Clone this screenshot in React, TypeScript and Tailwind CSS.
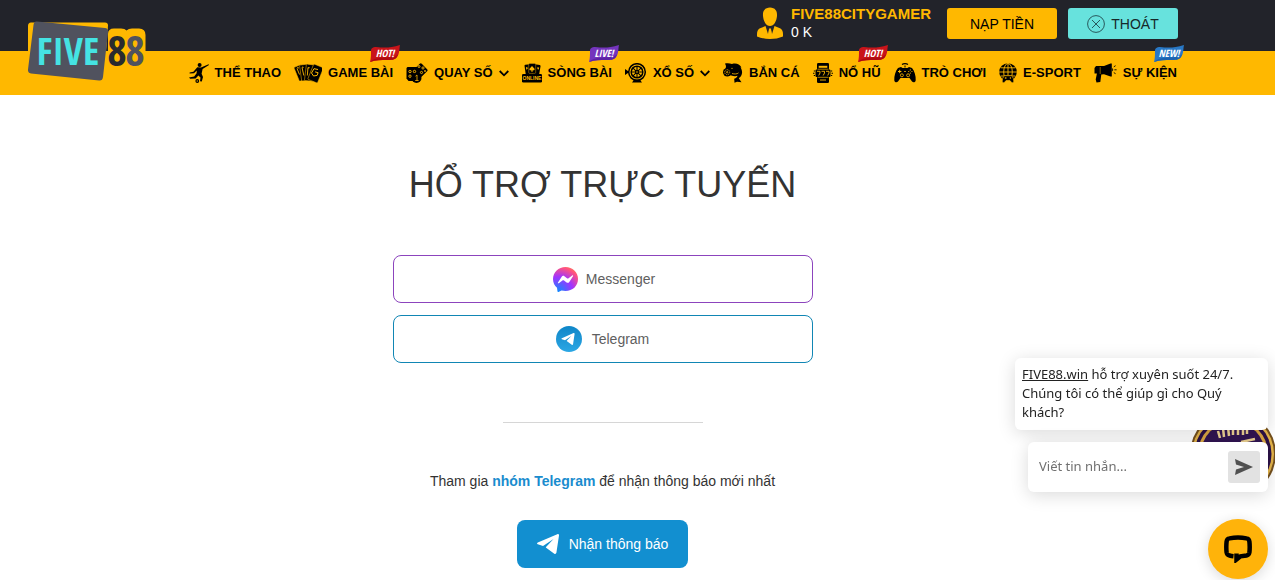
import React from 'react';

type IconProps = { children: React.ReactNode; w: string; box: string };

function Icon({ children, w, box }: IconProps) {
  return (
    <svg viewBox={box} className={`${w} shrink-0`} fill="#000" aria-hidden="true">
      {children}
    </svg>
  );
}

const Y = '#ffb800';
const CONDENSED = 'Open Sans Condensed, Roboto Condensed, Liberation Sans Narrow, DejaVu Sans Condensed, sans-serif';

const soccer = (
  <Icon w="w-5 h-5" box="0 0 20 20">
    <circle cx="10.6" cy="2" r="2" />
    <path d="M8.3 4.2 12 4.4 19.6 1.2 20 2 13.6 6.1 12.6 10.8 14 14 12.8 18.5 11 18.3 11.5 14.6 9.4 12.4 6.6 15.4 1.2 15.8 0 14.4 5.2 13.6 7.6 10.2 7.8 7.4 5 10.2 0.6 10.6 0.6 9.6 4.4 8.8Z" />
    <circle cx="8.3" cy="18" r="1.9" />
    <path d="M7.6 17.6h1.4v.9H7.6z" fill={Y} />
  </Icon>
);

const cards = (
  <Icon w="w-7 h-5" box="0 0 28 20">
    <g stroke={Y} strokeWidth=".5">
      <rect x="2" y="2.5" width="8" height="15" rx="1" transform="rotate(-22 6 9)" />
      <rect x="6.5" y="1.5" width="8.5" height="16" rx="1" transform="rotate(-8 11 9)" />
      <rect x="11.5" y="1.5" width="9" height="16.5" rx="1" transform="rotate(7 16 9)" />
      <rect x="16.500" y="2" width="10.500" height="16.500" rx="1" transform="rotate(22 21 10)" />
    </g>
    <path d="m3 5.500 2.500 6M8 4.500l1.800 8M14 4.500l-.7 8" stroke={Y} strokeWidth=".9" />
    <path d="m24 6.500-4-.8-2.500 4.300 2 3 3.600-.6 1-2.700-3-.8" fill="none" stroke={Y} strokeWidth="1" />
    <path d="m3 4 2 .5-1 1.5zM8 3.6l1.8.3-1 1.6zM14 4l1.8.3-1 1.6z" fill={Y} />
  </Icon>
);

const dice = (
  <Icon w="w-[22px] h-5" box="0 0 22 20">
    <rect x="9.5" y="2" width="10.5" height="10.5" rx="1.5" transform="rotate(45 14.8 7.2)" />
    <path d="M1.5 4H12l2 2v11l-2 1H2.5L.5 15.5V5z" />
    <g fill="none" stroke={Y} strokeWidth=".9">
      <circle cx="13" cy="3.5" r="1" /><circle cx="17" cy="5" r="1.1" /><circle cx="15.5" cy="9.5" r="1.1" /><circle cx="19" cy="8" r=".6" />
      <circle cx="4" cy="8.5" r="1.2" /><circle cx="8.5" cy="8.5" r="1.2" /><circle cx="4" cy="13.2" r="1.2" />
    </g>
    <circle cx="10.5" cy="15" r="5" />
    <path d="M9.5 13.2 11 12v5.5M9.2 17.5h3.4" fill="none" stroke={Y} strokeWidth=".8" />
  </Icon>
);

const online = (
  <Icon w="w-5 h-5" box="0 0 20 20">
    <rect x="3" y="1.5" width="7" height="10" rx="1" transform="rotate(-8 6 6)" />
    <rect x="11" y="1.5" width="7" height="10" rx="1" transform="rotate(10 14 6)" />
    <rect x="6.7" y=".4" width="7" height="10" rx="1" stroke={Y} strokeWidth=".4" />
    <path d="m10 3 2.500 2.700c.5 1.400-1 2-2 1.200l.5 1.500H9l.5-1.500c-1 .8-2.500.2-2-1.200z" fill={Y} />
    <path d="m4 4.500 1.200-.8.5 2-1.300 1zM15.500 4l1.700.8-.8 2-1-.7z" fill={Y} />
    <rect y="11" width="20" height="8.500" rx="1.300" />
    <text x="10" y="17" fill={Y} fontSize="5" fontWeight="700" textAnchor="middle" fontFamily="Liberation Sans, sans-serif">ONLINE</text>
  </Icon>
);

const wheel = (
  <Icon w="w-[22px] h-5" box="0 0 22 20">
    <g fill="none" stroke="#000">
      <circle cx="12" cy="9" r="8.3" strokeWidth="1.5" />
      <circle cx="12" cy="9" r="5.8" strokeWidth="1.5" />
      <path d="M12 3v12M6 9h12M7.8 4.8l8.4 8.400M16.200 4.800l-8.400 8.400" strokeWidth="1.1" />
    </g>
    <circle cx="12" cy="9" r="2" />
    <circle cx="12" cy="9" r=".8" fill={Y} />
    <path d="M0 6 4.500 9 0 12zM9 16.800h6l2 2.700H7z" />
  </Icon>
);

const fish = (
  <Icon w="w-5 h-5" box="0 0 20 20">
    <path d="M3 3 2 .500C5 0 7 .3 9 1c4-1.300 7.500 0 9.500 3.500l-1-.2c1.200 2 1.800 4 1.500 6-.3 2.200-1.500 4-3.200 5l2.700 4-4.500-.5-2.500 1-.3-4c2-.7 3-1.500 3.300-3-2 .8-4 .5-6.300-.3L4 12 2.600 6z" />
    <circle cx="4.2" cy="9.200" r="4.200" />
    <g stroke={Y} fill="none" strokeWidth=".8">
      <circle cx="4.2" cy="9.200" r="2.5" strokeDasharray="1.2 .7" />
      <circle cx="4.2" cy="9.200" r=".7" />
      <path d="M9 10.500c2.500.8 5 .6 6.500-.6" />
    </g>
    <circle cx="9" cy="5.3" r=".6" fill={Y} />
  </Icon>
);

const slot = (
  <Icon w="w-5 h-5" box="0 0 20 20">
    <rect x="4" y="0" width="12" height="20" rx="1.3" />
    <path d="M5.7 2.800h8.600v2H5.700z" fill={Y} />
    <rect x="2.500" y="6.500" width="15" height="7.500" rx="1" />
    <path d="M4.500 6.200h11M4.500 14.300h11" stroke={Y} strokeWidth=".7" />
    <path d="M4 8.300h3v1.700l-1.300 2.500M8.500 8.300h3v1.700l-1.300 2.500M13 8.300h3v1.700l-1.300 2.500" fill="none" stroke={Y} strokeWidth=".9" />
    <path d="M.8 7.500H2v1H.8zM.8 12H2v1H.8zM18 7.500h1.200v1H18zM18 12h1.200v1H18zM0 9.800h1.500v1H0zM18.500 9.800H20v1h-1.500z" />
    <path d="M7 17h6" stroke={Y} strokeWidth=".9" />
  </Icon>
);

const gamepad = (
  <Icon w="w-[22px] h-5" box="0 0 22 20">
    <path d="M8 1.5C9.5.3 12.5.3 14 1.5" fill="none" stroke="#000" strokeWidth="1.1" />
    <path d="M10.500 2.500h1v2h-1zM4 5l3-1 1.500 1h5L15 4l3 1c2.500 3 4 8 3.700 12.200-.2 2-2.200 2.800-3.700 1.400L15.500 15h-9L4 18.600C2.500 20 .5 19.200.3 17.200 0 13 1.500 8 4 5z" />
    <g fill="none" stroke={Y} strokeWidth=".8">
      <circle cx="7.9" cy="12.300" r="1.500" /><circle cx="14.100" cy="12.300" r="1.500" />
      <path d="M5.700 6.800v3.400M4 8.500h3.400" strokeWidth="1" />
    </g>
    <g fill={Y}><circle cx="16.3" cy="6.900" r=".6" /><circle cx="16.3" cy="10.100" r=".6" /><circle cx="14.700" cy="8.500" r=".6" /><circle cx="17.900" cy="8.500" r=".6" /><path d="M10 8h2v.8h-2z" /></g>
  </Icon>
);

const globe = (
  <Icon w="w-[18px] h-5" box="0 0 18 20">
    <circle cx="9" cy="9" r="8.8" />
    <g fill="none" stroke={Y} strokeWidth=".9">
      <ellipse cx="9" cy="9" rx="4.300" ry="8.500" />
      <path d="M9 0v12M0 9h18M1.700 4.800h14.600M1.700 13h14.600" />
    </g>
    <path d="M5.700 12.700h6.600c1.800 1 2.800 3.800 2.400 6-.4 1.300-1.800 1.400-2.500.4l-1.200-1.600H7l-1.200 1.600c-.7 1-2.100.9-2.500-.4-.4-2.200.6-5 2.400-6z" stroke={Y} strokeWidth=".7" />
    <path d="M6.700 14v2M5.700 15h2" stroke={Y} strokeWidth=".6" /><circle cx="11.400" cy="15" r=".7" fill={Y} />
  </Icon>
);

const horn = (
  <Icon w="w-[23px] h-5" box="0 0 23 20">
    <path d="M2 3h8L16.500.5h1.300v13h-1.300L10 11.200l-2.700.2-1 7.600-3.800.6-.8-3 1.200-6L.5 10.400V5z" />
    <path d="M6.200 4v7" stroke={Y} strokeWidth=".5" />
    <path d="M18.200 5c1.300 1 1.300 2.600 0 3.600z" />
    <path d="m19.800 3.800 1.800-1.100M20.400 6.800h2.200M19.800 9.600l1.800 1.100" stroke="#000" strokeWidth=".9" />
  </Icon>
);

type Badge = { text: string; fill: string; dark: string };
type Item = { label: string; icon: React.ReactNode; menu?: boolean; badge?: Badge };

const hot: Badge = { text: 'HOT!', fill: '#c9141a', dark: '#b00a10' };

const items: Item[] = [
  { label: 'THỂ THAO', icon: soccer },
  { label: 'GAME BÀI', icon: cards, badge: hot },
  { label: 'QUAY SỐ', icon: dice, menu: true },
  { label: 'SÒNG BÀI', icon: online, badge: { text: 'LIVE!', fill: '#7434bd', dark: '#5c22a4' } },
  { label: 'XỔ SỐ', icon: wheel, menu: true },
  { label: 'BẮN CÁ', icon: fish },
  { label: 'NỔ HŨ', icon: slot, badge: hot },
  { label: 'TRÒ CHƠI', icon: gamepad },
  { label: 'E-SPORT', icon: globe },
  { label: 'SỰ KIỆN', icon: horn, badge: { text: 'NEW!', fill: '#2878c6', dark: '#1d62ae' } },
];

function Flag({ text, fill, dark }: Badge) {
  return (
    <svg viewBox="0 0 32 18" className="absolute -top-[18px] -right-2 h-[18px] w-8" aria-hidden="true">
      <path d="M2 6c0-3 2-4 5-4 9 1 14 1 24-2-1 4 0 8-3 12-2 3-6 3-10 3-6 0-11 0-17 2 1-4 1-7 1-11z" fill={fill} />
      <path d="M1 17c6-2 11-2 17-2 4 0 8 0 10-3l1.300-3C26 13 20 12 14 12.500 8 13 4 14 1 17z" fill={dark} />
      <text x="16" y="12" fontSize="10" fontStyle="italic" fill="#fff" textAnchor="middle" fontFamily={CONDENSED}>{text}</text>
    </svg>
  );
}

function Logo() {
  return (
    <a href="#" aria-label="FIVE88" className="absolute top-5 left-7 block">
      <svg viewBox="0 0 120 62" className="h-[62px] w-[120px]">
        <path d="M3 2.500h74q3 0 3 3L77 45H0V6q0-3.500 3-3.500z" fill={Y} />
        <path d="M80 14q0-5.500 6-5.500h7q4 0 5.500 2 2-2 5.500-2h7q6.500 0 6.500 6.500v28H80z" fill={Y} />
        <path d="M9 1.500 77 8q3.500.5 3 4l-5 45q-.5 4-4 3.500L3 53.500q-3.500-.5-3-4L5.500 5q.5-4 3.500-3.500z" fill="#50525e" />
        <g fontFamily={CONDENSED} fontWeight="700" textAnchor="middle">
          <text x="40" y="45" fontSize="38" fill="#45e3e3">FIVE</text>
          <text x="89" y="46" fontSize="42" fill="#292a2e">8</text>
          <text x="107" y="46" fontSize="42" fill="#50525e">8</text>
        </g>
      </svg>
    </a>
  );
}

function Plane({ className }: { className: string }) {
  return (
    <svg viewBox="0 0 22 20" className={className} fill="#fff" aria-hidden="true">
      <path d="M20.300.200.800 8.600c-1 .5-1 1.300 0 1.700l5.200 1.700L16.500 5 9 13l-.2.500 8.500 6.200c1 .6 1.800.2 2.100-.9L22 1.500c.2-1.200-.6-1.700-1.700-1.300z" />
    </svg>
  );
}

function Header() {
  return (
    <header className="relative font-['Liberation_Sans',sans-serif]">
      <div className="flex h-[51px] items-start justify-end bg-[#22232a] pr-[97px]">
        <div className="mt-[5px] flex items-center gap-2">
          <svg viewBox="0 0 26 32" className="h-8 w-[26px]" aria-hidden="true">
            <path d="M13 .5c5 0 7.500 3.500 7 8.500-.4 5-3 10-7 10s-6.600-5-7-10C5.500 4 8 .5 13 .5z" fill={Y} />
            <path d="m8.500 19-6 2.500Q0 23 0 27v2.500Q6 32 13 32t13-2.500V27q0-4-2.500-5.500l-6-2.500L15 27l-1-5h-2l-1 5z" fill={Y} />
            <path d="M12 21.500h2v2l.5 4-1.500 2-1.500-2 .5-4z" fill={Y} />
          </svg>
          <div className="flex flex-col">
            <span className="text-[15px] leading-[18px] font-bold text-[#ffb800]">FIVE88CITYGAMER</span>
            <span className="text-sm leading-[18px] text-white">0 K</span>
          </div>
        </div>
        <button className="mt-2 ml-4 h-[31px] w-[110px] rounded-[3px] bg-[#ffb800] text-sm text-black">NẠP TIỀN</button>
        <button className="mt-2 ml-[11px] flex h-[31px] w-[110px] items-center justify-center gap-[6px] rounded-[3px] bg-[#67e2dd] text-sm text-[#16282a]">
          <svg viewBox="0 0 18 18" className="h-[18px] w-[18px]" fill="none" stroke="#28595c" aria-hidden="true">
            <circle cx="9" cy="9" r="8.400" />
            <path d="m5 5 8 8M13 5l-8 8" />
          </svg>
          THOÁT
        </button>
      </div>
      <nav className="flex h-11 items-center justify-end gap-[13px] bg-[#ffb800] pr-[98px]">
        {items.map((it) => (
          <a key={it.label} href="#" className="relative flex items-center gap-[6px] text-[13px] leading-5 font-bold whitespace-nowrap text-black">
            {it.icon}
            <span>{it.label}</span>
            {it.menu && (
              <svg viewBox="0 0 10 7" className="h-[7px] w-[10px]" fill="none" stroke="#000" strokeWidth="1.8" aria-hidden="true">
                <path d="m.7 1 4.300 4.300L9.300 1" />
              </svg>
            )}
            {it.badge && <Flag {...it.badge} />}
          </a>
        ))}
      </nav>
      <Logo />
    </header>
  );
}

function Chat() {
  return (
    <aside className="fixed right-[7px] bottom-px flex flex-col items-end font-['Noto_Sans',sans-serif] text-[13px]">
      <svg viewBox="0 0 86 68" className="absolute top-[53px] -right-2 h-[68px] w-[86px]" aria-hidden="true">
        <circle cx="43" cy="43" r="43" fill="#74501e" />
        <circle cx="43" cy="43" r="41" fill="#e5b54a" />
        <circle cx="43" cy="43" r="38.500" fill="#2c1247" />
        <circle cx="43" cy="43" r="35" fill="#dca843" />
        <circle cx="43" cy="43" r="32" fill="#321553" />
        <path d="m28 20 2 7M33 17l1 9M38 16l1 9M43 16v8M48 16v8M53 16v8M57 17v6M51 31l14-3" stroke="#efd494" strokeWidth="2.500" />
      </svg>
      <p className="relative w-[253px] rounded-md bg-white px-[7px] pt-[7px] pb-2 leading-[19px] text-[#222] shadow-[0_3px_18px_rgba(0,0,0,0.15)]">
        <a href="#" className="underline">FIVE88.win</a> hỗ trợ xuyên suốt 24/7. Chúng tôi có thể giúp gì cho Quý khách?
      </p>
      <form className="relative mt-3 flex h-[50px] w-60 items-center rounded-md bg-white pr-2 pl-[11px] shadow-[0_3px_18px_rgba(0,0,0,0.15)]" onSubmit={(e) => e.preventDefault()}>
        <input type="text" aria-label="Tin nhắn" placeholder="Viết tin nhắn..." className="min-w-0 flex-1 bg-transparent outline-none placeholder:text-[#707070]" />
        <button aria-label="Gửi" className="flex h-8 w-8 items-center justify-center rounded-[3px] bg-[#e2e2e2]">
          <svg viewBox="0 0 18 16" className="h-4 w-[18px]" fill="#505050" aria-hidden="true">
            <path d="M0 0 18 8 0 16 1 10.500 9 8 1 5.500z" />
          </svg>
        </button>
      </form>
      <button aria-label="Chat" className="relative mt-[27px] flex h-[60px] w-[60px] items-center justify-center rounded-full bg-[#ffb30a] shadow-[0_3px_14px_rgba(0,0,0,0.15)]">
        <svg viewBox="0 0 28 28" className="h-7 w-7" fill="none" stroke="#000" strokeWidth="4.500" aria-hidden="true">
          <path d="M9.500 21.200Q7.500 21 5.500 20.500 3 20 2.600 17.500 2 12 2.600 6.500 3 3.800 5.500 3.400 14 1.800 22.500 3.400 25 3.800 25.400 6.500 26 12 25.400 17.500 25 20 22.500 20.500L16.500 21.300 12.500 24.500V18.500" />
        </svg>
      </button>
    </aside>
  );
}

export default function App() {
  return (
    <div className="min-h-screen bg-white">
      <Header />
      <main className="flex flex-col items-center pr-[70px] pb-3 font-['Liberation_Sans',sans-serif] text-sm text-[#333]">
        <h1 className="mt-[68px] text-4xl leading-[44px]">HỔ TRỢ TRỰC TUYẾN</h1>
        <div className="mt-12 flex w-[420px] max-w-full flex-col gap-3 text-[#606060]">
          <a href="#" className="flex h-12 items-center justify-center gap-2 rounded-lg border border-[#8c44bd] pl-[3px]">
            <svg viewBox="0 0 25 25" className="h-[25px] w-[25px]" aria-hidden="true">
              <defs>
                <radialGradient id="messenger" cx=".2" cy="1" r="1.100">
                  <stop offset="0" stopColor="#0a8cff" />
                  <stop offset=".55" stopColor="#a033ff" />
                  <stop offset=".9" stopColor="#ff5280" />
                  <stop offset="1" stopColor="#ff7061" />
                </radialGradient>
              </defs>
              <path d="M12.500 0C5.500 0 0 5 0 12c0 3.700 1.500 6.500 4 8.700L4.500 24.500q.2.700 1 .400L8.500 23.500c1.300.3 2.600.5 4 .5 7 0 12.500-5 12.500-12S19.500 0 12.500 0z" fill="url(#messenger)" />
              <path d="m5 15.500 3.700-5.800c.6-1 1.800-1.100 2.700-.5l2.900 2.200c.3.200.6.200.9 0l4-3c.5-.4 1.200.200.8.8l-3.700 5.800c-.6 1-1.800 1.100-2.700.5l-2.900-2.200c-.3-.2-.6-.2-.9 0l-4 3c-.5.400-1.200-.2-.8-.8z" fill="#fff" />
            </svg>
            Messenger
          </a>
          <a href="#" className="flex h-12 items-center justify-center gap-[10px] rounded-lg border border-[#1186b4]">
            <span className="flex h-[26px] w-[26px] items-center justify-center rounded-full bg-linear-to-b from-[#0e86c8] to-[#2ba7e4]">
              <Plane className="mr-[2px] h-3 w-[14px]" />
            </span>
            Telegram
          </a>
        </div>
        <hr className="mt-[59px] w-[200px] border-[#d6d6d6]" />
        <p className="mt-12 leading-5">
          Tham gia <a href="#" className="font-bold text-[#1a8cce]">nhóm Telegram</a> để nhận thông báo mới nhất
        </p>
        <a href="#" className="mt-[29px] flex h-12 items-center gap-[10px] rounded-lg bg-[#128fd0] px-5 text-white">
          <Plane className="h-5 w-[22px]" />
          Nhận thông báo
        </a>
      </main>
      <Chat />
    </div>
  );
}
